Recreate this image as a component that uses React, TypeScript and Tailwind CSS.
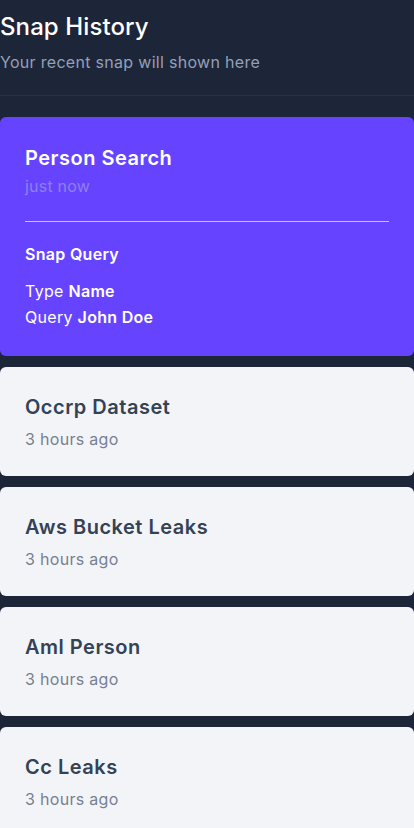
import React from "react";

const items = ["Occrp Dataset", "Aws Bucket Leaks", "Aml Person", "Cc Leaks"];

export default function App() {
  return (
    <div
      className="min-h-[828px] w-[414px] bg-[#1d2539] overflow-hidden"
      style={{ fontFamily: "Inter, 'Noto Sans', sans-serif" }}
    >
      <div className="pt-[11px] pb-[21px] border-b border-[#263048]">
        <h1 className="text-[24px] leading-[32px] font-medium text-white tracking-[0.1px]">Snap History</h1>
        <p className="mt-[7px] text-[16px] leading-[24px] text-[#94a0b8] tracking-[0.3px]">
          Your recent snap will shown here
        </p>
      </div>
      <div className="mt-[21px] flex flex-col gap-[11px]">
        <div className="rounded-[6px] bg-[#6644ff] px-[25px] pt-[27px] pb-[26px]">
          <div className="text-[20px] leading-[28px] font-semibold text-white tracking-[0.5px]">Person Search</div>
          <div className="mt-[2px] text-[16px] leading-[24px] text-[#8f7fe8] tracking-[0.2px]">just now</div>
          <div className="mt-[23px] h-px bg-[#c9c1ff]" />
          <div className="mt-[20px] text-[16px] leading-[24px] font-semibold text-white tracking-[0.3px]">Snap Query</div>
          <div className="mt-[12px] text-[16px] leading-[26px] text-white tracking-[0.3px]">
            Type <span className="font-semibold">Name</span>
          </div>
          <div className="text-[16px] leading-[26px] text-white tracking-[0.3px]">
            Query <span className="font-semibold">John Doe</span>
          </div>
        </div>
        {items.map((t) => (
          <div key={t} className="rounded-[6px] bg-[#f3f4f8] px-[25px] pt-[26px] pb-[25px]">
            <div className="text-[20px] leading-[28px] font-semibold text-[#344256] tracking-[0.5px]">{t}</div>
            <div className="mt-[6px] text-[16px] leading-[24px] text-[#767f92] tracking-[0.3px]">3 hours ago</div>
          </div>
        ))}
      </div>
    </div>
  );
}
